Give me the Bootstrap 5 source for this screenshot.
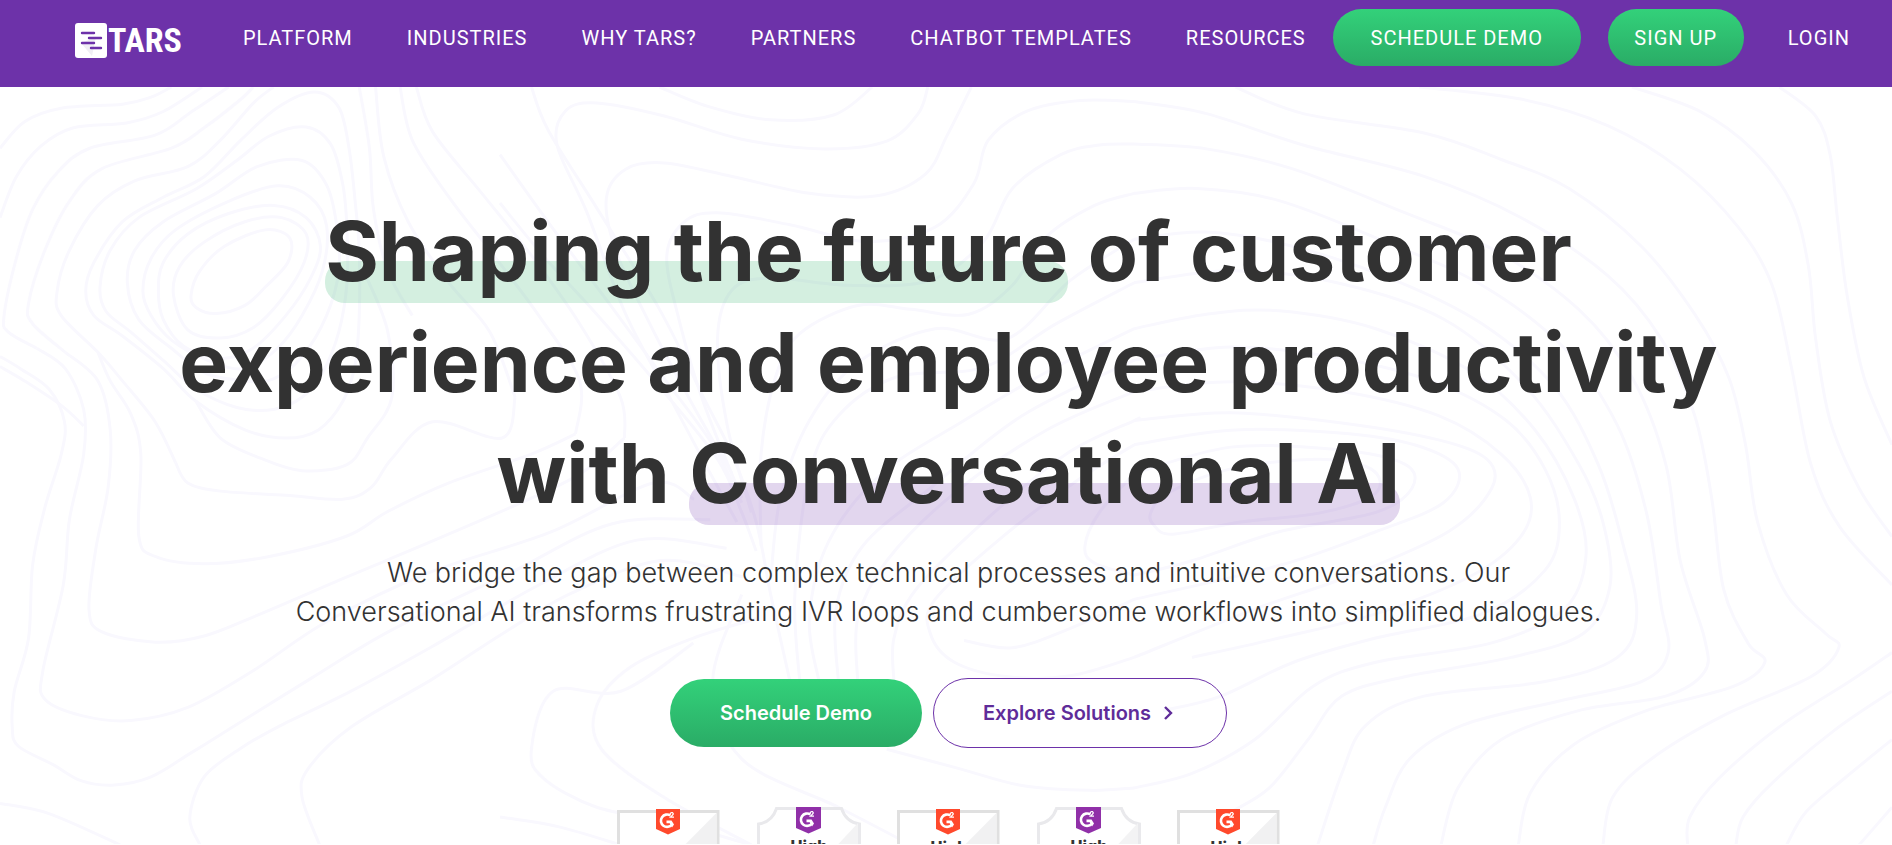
<!DOCTYPE html>
<html lang="en">
<head>
<meta charset="utf-8">
<meta name="viewport" content="width=device-width, initial-scale=1">
<title>TARS - Conversational AI</title>
<link href="https://cdn.jsdelivr.net/npm/bootstrap@5.3.0/dist/css/bootstrap.min.css" rel="stylesheet">
<style>
  body { font-family: Inter, "Open Sans", sans-serif; color: #323232; background: #fff; }
  .site-nav { --bs-navbar-nav-link-padding-x: 27px; background: #6d32a9; padding: 9px 38px 21px 75px; font-family: Roboto, sans-serif; font-size: 20px; letter-spacing: 1px; line-height: 24px; white-space: nowrap; }
  .brand { gap: 1px; margin-right: 34px; padding-top: 5px; color: #fff; font-family: "Roboto Condensed", "Liberation Sans Narrow", sans-serif; font-weight: 700; font-size: 34px; line-height: 36px; letter-spacing: 0; }
  .site-nav .nav-link { color: #fff; }
  .site-nav .login-link { color: #fff; margin-left: 44px; }
  .pill { border: 0; border-radius: 35px; color: #fff; background: linear-gradient(#33d17a, #2aac66); }
  .pill:hover { color: #fff; }
  .pill-nav { height: 57px; border-radius: 29px; font-size: 20px; letter-spacing: 1px; }
  .pill-wide { width: 248px; }
  .pill-slim { width: 136px; margin-left: 27px; }
  .hero { padding-top: 109px; padding-left: 5px; isolation: isolate; }
  .contours { top: 0; left: 0; z-index: -2; }
  .contours path { fill: none; stroke: #f9f8fe; stroke-width: 3; vector-effect: non-scaling-stroke; }
  .headline { font-weight: 700; font-size: 82px; line-height: 111px; }
  .stripe { position: relative; }
  .stripe::before { content: ""; position: absolute; z-index: -1; left: 0; right: 0; bottom: -2px; height: 42px; border-radius: 20px; background: rgba(41, 174, 98, .2); }
  .stripe-purple::before { background: rgba(109, 50, 169, .2); }
  .lede { margin-top: 24px; font-size: 27px; line-height: 39px; font-weight: 300; }
  .actions { margin-top: 47px; gap: 11px; }
  .pill-hero { width: 252px; height: 68px; font-size: 20px; font-weight: 600; }
  .pill-line { width: 294px; height: 70px; border: 1px solid #6d32a9; border-radius: 35px; color: #5f2c99; font-size: 20px; font-weight: 600; }
  .awards { margin-top: 59px; gap: 36px; height: 37px; overflow: hidden; }
  .award-svg text { font: 800 16px Inter, sans-serif; fill: #333; text-anchor: middle; }
</style>
</head>
<body>
<header>
  <nav class="site-nav navbar navbar-expand d-flex flex-nowrap justify-content-start align-items-center" aria-label="Main">
    <a class="brand d-flex align-items-center text-decoration-none" href="#">
      <svg width="32" height="35" viewBox="0 0 32 35" aria-hidden="true">
        <rect width="32" height="35" rx="3" fill="#fff"/>
        <path d="M6 20 17 33 21 14z" fill="#f0eff4"/>
        <g stroke="#6d32a9" stroke-width="2.400" stroke-linecap="round"><path d="M7 10H19M14 15H26M7 20H19M16 25H26"/></g>
      </svg>
      <span>TARS</span>
    </a>
    <ul class="navbar-nav">
      <li class="nav-item"><a class="nav-link" href="#">PLATFORM</a></li>
      <li class="nav-item"><a class="nav-link" href="#">INDUSTRIES</a></li>
      <li class="nav-item"><a class="nav-link" href="#">WHY TARS?</a></li>
      <li class="nav-item"><a class="nav-link" href="#">PARTNERS</a></li>
      <li class="nav-item"><a class="nav-link" href="#">CHATBOT TEMPLATES</a></li>
      <li class="nav-item"><a class="nav-link" href="#">RESOURCES</a></li>
    </ul>
    <button class="btn pill pill-nav pill-wide" type="button">SCHEDULE DEMO</button>
    <button class="btn pill pill-nav pill-slim" type="button">SIGN UP</button>
    <a class="login-link text-decoration-none" href="#">LOGIN</a>
  </nav>
</header>

<main class="hero position-relative text-center">
  <svg class="contours position-absolute w-100" viewBox="0 0 1892 758" aria-hidden="true">
    <g id="west" transform="scale(.4082)"></g>
    <g id="middle" transform="translate(500 0) scale(.4834)"></g>
    <g id="east" transform="translate(1134 0) scale(.4834)"></g>
  </svg>

  <h1 class="headline mb-0"><span class="stripe">Shaping the future</span> of customer<br>experience and employee productivity<br>with <span class="stripe stripe-purple">Conversational AI</span></h1>
  <p class="lede mb-0">We bridge the gap between complex technical processes and intuitive conversations. Our<br>Conversational AI transforms frustrating IVR loops and cumbersome workflows into simplified dialogues.</p>
  <div class="actions d-flex justify-content-center align-items-center">
    <button class="btn pill pill-hero" type="button">Schedule Demo</button>
    <button class="btn pill-line d-flex align-items-center justify-content-center" type="button">Explore Solutions
      <svg class="ms-2" width="18" height="18" viewBox="0 0 18 18" fill="none" stroke="#5f2c99" stroke-width="2.400" aria-hidden="true"><path d="M6 3l6 6-6 6"/></svg>
    </button>
  </div>

  <svg width="0" height="0" class="position-absolute" aria-hidden="true">
    <defs>
      <g id="g2">
        <path d="M15.500 8.500A6.200 6.200 0 1 0 17 17.500" fill="none" stroke="#fff" stroke-width="2.600"/>
        <path d="M11.500 13.500h5l2.500 4-2 3-2.300-4.300h-3.200z" fill="#fff"/>
        <path d="M15.200 7.200q.5-2 2.300-1.500 1.500 1 0 2.400l-2 2h3.500" fill="none" stroke="#fff" stroke-width="1.300"/>
      </g>
      <g id="badge-square">
        <path d="M1.500 60V4.500H101V60" fill="#fff" stroke="#e0e0e0" stroke-width="3"/>
        <path d="M99.500 6V60H46z" fill="#f1f1f2"/>
        <path d="M39 2h24v20l-12 5.500-12-5.500z" fill="#ff492c"/>
        <use href="#g2" x="38" y="0"/>
      </g>
      <g id="badge-notch">
        <path d="M1.500 60V17Q15 15 19.500 1.500H84.500Q89 15 102.500 17V60" fill="#fff" stroke="#e9e9ec" stroke-width="3"/>
        <path d="M101 16V60H60z" fill="#f3f3f4"/>
        <path d="M39 0h25v21l-12.500 5.500L39 21z" fill="#9030a8"/>
        <use href="#g2" x="38" y="-1"/>
      </g>
    </defs>
  </svg>
  <div class="awards d-flex justify-content-center">
    <svg class="award-svg" width="104" height="37"><use href="#badge-square"/></svg>
    <svg class="award-svg" width="104" height="37"><use href="#badge-notch"/><text x="52" y="45">High</text></svg>
    <svg class="award-svg" width="104" height="37"><use href="#badge-square"/><text x="52" y="46">High</text></svg>
    <svg class="award-svg" width="104" height="37"><use href="#badge-notch"/><text x="52" y="45">High</text></svg>
    <svg class="award-svg" width="104" height="37"><use href="#badge-square"/><text x="52" y="46">High</text></svg>
  </div>
</main>

<script src="https://cdn.jsdelivr.net/npm/bootstrap@5.3.0/dist/js/bootstrap.bundle.min.js"></script>
<script>
  // Contour lines of the hero backdrop: each string is a chain of points, "z" closes it.
  const contours = {
    west: [
      "0,150 60,85 150,52 300,42 370,25 420,0",
      "0,320 40,220 100,145 180,100 310,88 400,60 495,0",
      "90,640 20,600 10,560 40,420 80,300 140,210 220,150 380,118 470,60 560,0",
      "160,650 80,580 70,530 110,400 170,280 250,200 420,150 500,100 590,30 620,0",
      "430,920 380,820 300,720 240,650 150,560 140,500 170,400 240,290 330,230 460,195 540,130 620,40 670,0",
      "210,500 230,430 300,330 400,270 500,220 590,130 680,50 770,12 830,50 855,150 870,280 880,400 880,560 870,680 840,770 780,840 700,860 600,840 480,770 400,690 300,610 230,560z",
      "245,490 270,400 340,320 480,250 580,180 660,120 750,98 810,140 840,240 850,350 850,480 830,600 790,700 740,760 670,790 580,785 480,740 400,670 320,600 260,550z",
      "312,480 330,400 400,330 530,260 630,195 740,180 800,240 825,340 830,450 800,560 740,660 670,715 600,720 500,700 420,640 340,570z",
      "350,500 370,420 430,350 560,280 680,242 760,270 800,340 790,450 740,560 680,640 600,690 510,670 420,620 370,560z",
      "388,500 400,430 460,360 560,310 670,290 750,320 785,390 760,470 700,560 620,640 540,665 450,635 400,570z",
      "425,510 440,440 500,380 600,330 690,320 750,360 745,430 690,520 620,590 540,615 460,595z",
      "468,510 490,450 550,390 650,350 710,370 705,430 650,490 600,535 530,555 480,540z",
      "0,660 50,690 120,740 158,820 150,900 110,1030 80,1170 70,1350 35,1480 30,1568 45,1615 130,1660 200,1700 280,1710 370,1690 470,1630 570,1568 760,1450 960,1330 1250,1190 1500,1070 1740,1060",
      "0,685 60,720 150,780 205,830",
      "160,650 240,720 270,840 265,980 235,1130 218,1280 250,1335 380,1360 500,1345 640,1290 850,1200 1100,1095 1400,960 1530,860",
      "90,640 160,690 205,790 205,900 170,1060 155,1220 105,1430 110,1500 200,1540 320,1552 460,1520 620,1430 800,1310 1050,1190 1350,1090 1600,970 1700,1010",
      "240,650 270,720 320,800 345,900 340,1100 380,1150 500,1168 660,1150 850,1100 950,1040 1100,970 1300,900 1410,850",
      "430,920 460,970 540,990 700,1000 840,1010 910,980 960,910 1060,820 1230,860 1262,760",
      "480,770 540,860 640,910 740,940 850,925 900,860 960,760 950,600 900,470",
      "880,0 905,150 915,300 950,450 1010,560",
      "920,0 940,170 1000,330 1100,480 1200,600 1262,760",
      "980,0 1010,130 1100,270 1200,400 1320,560 1420,720 1410,850",
      "1020,0 1060,110 1180,260 1300,410 1420,580 1520,760 1530,860",
      "490,1857 465,1790 500,1690 590,1620 680,1568 860,1480 1060,1370 1320,1220 1560,1110 1780,1130",
      "783,1857 740,1740 755,1670 860,1568 1060,1450 1230,1340 1400,1240 1620,1160 1820,1200",
      "0,1755 120,1780 295,1857"
    ],
    middle: [
      "65,0 100,90 200,250 330,460 420,640 480,760 530,900 560,1050 600,1230",
      "0,140 100,280 220,440 330,590 440,740 500,860",
      "0,240 90,350 200,470 330,620 450,770 500,880 530,960",
      "330,0 430,40 560,68 690,58 770,0",
      "490,900 430,790 350,640 260,470 180,260 118,120 135,50 200,33 340,60 500,108 670,128 800,112 865,55 885,0",
      "480,800 400,660 310,490 240,340 220,230 260,170 340,157 480,185 640,220 780,225 880,180 925,100 975,0",
      "500,850 420,650 370,480 345,350 380,280 450,260 600,285 760,320 900,290 980,200 1010,110 1090,50 1200,28 1312,30",
      "520,880 470,700 450,520 480,420 560,395 720,410 890,400 1000,320 1060,210 1160,140 1240,120 1312,118",
      "540,950 540,760 570,600 620,510 740,452 850,460 970,470 1060,410 1130,310 1230,245 1312,220",
      "560,1020 580,850 640,690 740,570 900,500 1050,520 1180,400 1312,315",
      "620,1230 610,1050 640,800 700,680 820,600 1000,580 1150,490 1312,405",
      "660,1230 640,1100 680,940 790,800 960,690 1130,590 1312,500",
      "700,1230 695,1080 750,950 890,830 1080,680 1312,565",
      "740,1230 740,1100 800,980 940,840 1130,710 1312,630",
      "815,1230 815,1140 860,1040 1000,900 1170,760 1312,690 1312,690",
      "1312,740 1200,810 1040,930 900,1060 890,1130 940,1190 1050,1220 1180,1218 1312,1180",
      "1312,800 1240,880 1210,950 1230,985 1312,1010",
      "1312,1060 1180,1120 1060,1160 960,1145",
      "400,1150 250,1250 110,1250 65,1370 90,1430 200,1490 350,1520 520,1568",
      "530,1100 400,1140 270,1200 200,1280 210,1370 340,1470 520,1568",
      "500,1050 440,1230 500,1390 700,1490 850,1568",
      "0,1510 120,1530 250,1568",
      "800,1370 950,1410 1080,1445 1220,1455 1312,1450"
    ],
    east: [
      "210,0 350,55 600,95 760,150 900,210 1050,330 1160,470 1230,600 1265,740 1290,900 1350,1050 1430,1130 1458,1160 1400,1220 1220,1300 1070,1390 990,1470 970,1568",
      "0,30 150,55 350,120 600,185 800,270 980,390 1090,520 1160,680 1195,850 1220,1040 1270,1150 1305,1190 1240,1240 1060,1290 910,1360 820,1460 795,1568",
      "0,118 150,128 330,170 560,260 750,340 920,460 1030,600 1100,780 1130,980 1180,1140 1180,1210 1100,1260 920,1290 760,1350 670,1450 635,1568",
      "0,220 130,210 300,235 520,320 720,410 890,540 1000,700 1060,880 1090,1070 1105,1170 1050,1230 880,1270 680,1320 570,1390 520,1490 495,1568",
      "0,315 150,300 330,330 540,400 720,490 870,620 960,780 1010,940 1040,1090 1000,1180 850,1230 600,1260 480,1320 430,1420 380,1568",
      "0,405 200,380 420,405 640,480 810,620 920,780 970,900 985,1030 930,1130 780,1180 560,1220 430,1260 360,1350 280,1450 200,1500",
      "0,500 150,470 300,463 500,500 700,590 830,710 910,850 935,970 890,1080 740,1150 500,1190 370,1240 250,1350 120,1420 0,1450",
      "0,565 200,538 420,560 620,610 770,690 850,790 880,900 850,1000 720,1090 500,1140 330,1190 180,1260 60,1290",
      "0,630 200,610 430,630 630,680 760,760 820,850 800,930 700,1010 500,1090 300,1140 120,1180",
      "0,690 200,674 430,695 630,730 730,770 740,830 650,920 450,1010 250,1080 0,1180",
      "0,740 200,710 420,715 580,740 670,790 640,860 500,920 300,990 0,1060",
      "0,800 200,745 420,750 560,780 575,830 500,880 300,920 120,980 0,1010",
      "35,880 70,840 200,790 380,770 490,790 500,840 390,880 220,900 80,925 40,905z",
      "590,0 800,25 980,80 1130,170 1250,290 1320,410 1360,580 1400,780 1460,910 1568,1030",
      "1030,0 1170,50 1280,130 1360,240 1395,370 1410,520 1440,690 1500,830 1568,930",
      "1335,0 1410,60 1440,140 1455,270 1475,430 1510,600 1568,740",
      "1568,1170 1480,1230 1340,1320 1210,1430 1150,1510 1145,1568",
      "1568,1250 1450,1330 1320,1440 1260,1510 1245,1568",
      "1568,1350 1470,1430 1390,1500 1350,1568",
      "1568,1490 1500,1568"
    ]
  };

  // Catmull-Rom spline through the points, written as cubic segments.
  function spline(chain) {
    const closed = chain.endsWith("z");
    const p = chain.replace("z", "").split(" ").map(s => s.split(",").map(Number));
    const n = p.length;
    const at = i => closed ? p[(i + n) % n] : p[Math.max(0, Math.min(n - 1, i))];
    let d = "M" + p[0];
    for (let i = 0; i < (closed ? n : n - 1); i++) {
      const [a, b, c, e] = [at(i - 1), at(i), at(i + 1), at(i + 2)];
      d += "C" + [b[0] + (c[0] - a[0]) / 6, b[1] + (c[1] - a[1]) / 6,
                  c[0] - (e[0] - b[0]) / 6, c[1] - (e[1] - b[1]) / 6, c[0], c[1]].join(" ");
    }
    return d;
  }
  for (const [id, chains] of Object.entries(contours)) {
    const group = document.getElementById(id);
    for (const chain of chains) {
      const path = document.createElementNS("http://www.w3.org/2000/svg", "path");
      path.setAttribute("d", spline(chain));
      group.append(path);
    }
  }
</script>
</body>
</html>
